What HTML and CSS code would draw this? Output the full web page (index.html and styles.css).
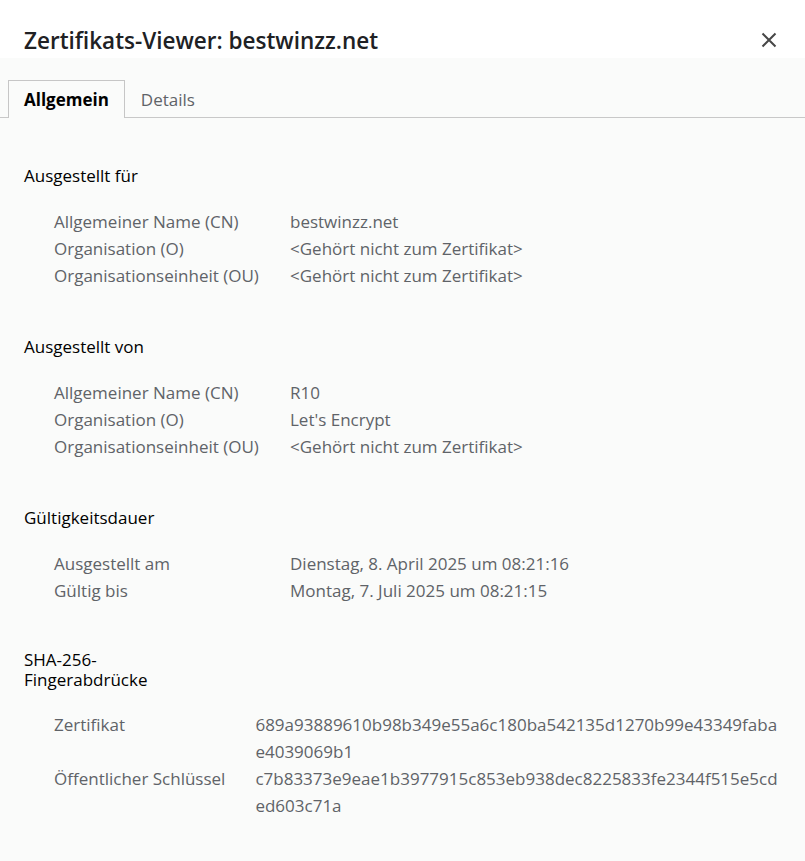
FILE: index.html
```html
<!DOCTYPE html>
<html lang="de">
<head>
<meta charset="utf-8">
<title>Zertifikats-Viewer: bestwinzz.net</title>
<link rel="stylesheet" href="styles.css">
</head>
<body>
<div class="dialog">
  <header class="titlebar">
    <h1 class="title">Zertifikats-Viewer: bestwinzz.net</h1>
    <button class="close" aria-label="Schließen">
      <svg width="16" height="16" viewBox="0 0 16 16"><path d="M1.5 1.5 L14.5 14.5 M14.5 1.5 L1.5 14.5" stroke="#474747" stroke-width="2" fill="none"/></svg>
    </button>
  </header>
  <div class="body">
    <nav class="tabs">
      <div class="tab active">Allgemein</div>
      <div class="tab">Details</div>
    </nav>
    <div class="content">
      <section class="section">
        <h2 class="heading">Ausgestellt für</h2>
        <dl class="fields">
          <dt>Allgemeiner Name (CN)</dt><dd>bestwinzz.net</dd>
          <dt>Organisation (O)</dt><dd>&lt;Gehört nicht zum Zertifikat&gt;</dd>
          <dt>Organisationseinheit (OU)</dt><dd>&lt;Gehört nicht zum Zertifikat&gt;</dd>
        </dl>
      </section>
      <section class="section">
        <h2 class="heading">Ausgestellt von</h2>
        <dl class="fields">
          <dt>Allgemeiner Name (CN)</dt><dd>R10</dd>
          <dt>Organisation (O)</dt><dd>Let's Encrypt</dd>
          <dt>Organisationseinheit (OU)</dt><dd>&lt;Gehört nicht zum Zertifikat&gt;</dd>
        </dl>
      </section>
      <section class="section">
        <h2 class="heading">Gültigkeitsdauer</h2>
        <dl class="fields">
          <dt>Ausgestellt am</dt><dd>Dienstag, 8. April 2025 um 08:21:16</dd>
          <dt>Gültig bis</dt><dd>Montag, 7. Juli 2025 um 08:21:15</dd>
        </dl>
      </section>
      <section class="section fingerprints">
        <h2 class="heading narrow">SHA-256-Fingerabdrücke</h2>
        <dl class="fields hashes">
          <dt>Zertifikat</dt><dd>689a93889610b98b349e55a6c180ba542135d1270b99e43349fabae4039069b1</dd>
          <dt>Öffentlicher Schlüssel</dt><dd>c7b83373e9eae1b3977915c853eb938dec8225833fe2344f515e5cded603c71a</dd>
        </dl>
      </section>
    </div>
  </div>
</div>
</body>
</html>
```

FILE: styles.css
```css
* { box-sizing: border-box; }
html, body {
  margin: 0;
  padding: 0;
  height: 100%;
}
body {
  font-family: "Open Sans", "Noto Sans", sans-serif;
  background: #fafbfa;
  color: #202124;
}
.dialog {
  min-height: 100%;
  display: flex;
  flex-direction: column;
}
.titlebar {
  background: #ffffff;
  height: 58px;
  display: flex;
  align-items: flex-end;
  justify-content: space-between;
  padding: 0 28px 0 24px;
}
.title {
  margin: 0;
  font-size: 22.5px;
  font-weight: 600;
  line-height: 30px;
  padding-bottom: 2px;
  color: #202124;
}
.close {
  border: 0;
  background: transparent;
  padding: 0;
  width: 16px;
  height: 16px;
  margin-bottom: 10px;
  display: flex;
}
.body {
  flex: 1;
  background: #fafbfa;
}
.tabs {
  display: flex;
  align-items: flex-end;
  padding: 22px 0 0 8px;
  border-bottom: 1px solid #c8c8c8;
}
.tab {
  height: 37px;
  padding: 0 15px;
  display: flex;
  align-items: center;
  font-size: 17px;
  color: #5f6368;
  border: 1px solid transparent;
  border-bottom: 0;
}
.tab.active {
  color: #000;
  font-weight: 700;
  border-color: #c6c6c6;
  background: #fafbfa;
  height: 38px;
  margin-bottom: -1px;
}
.content {
  padding: 48px 24px 0 24px;
  display: flex;
  flex-direction: column;
  gap: 48px;
}
.section.fingerprints {
  margin-top: -2px;
}
.heading {
  margin: 0 0 22px 0;
  font-size: 17px;
  font-weight: 400;
  line-height: 20px;
  color: #000;
}
.heading.narrow {
  max-width: 150px;
  margin-bottom: 21px;
}
.fields {
  margin: 0;
  padding-left: 30px;
  display: grid;
  grid-template-columns: 236px 1fr;
  font-size: 17px;
  line-height: 27px;
  color: #5f6368;
}
.fields dt, .fields dd {
  margin: 0;
}
.hashes {
  grid-template-columns: max-content 1fr;
  column-gap: 30px;
}
.hashes dd {
  word-break: break-all;
}
```
